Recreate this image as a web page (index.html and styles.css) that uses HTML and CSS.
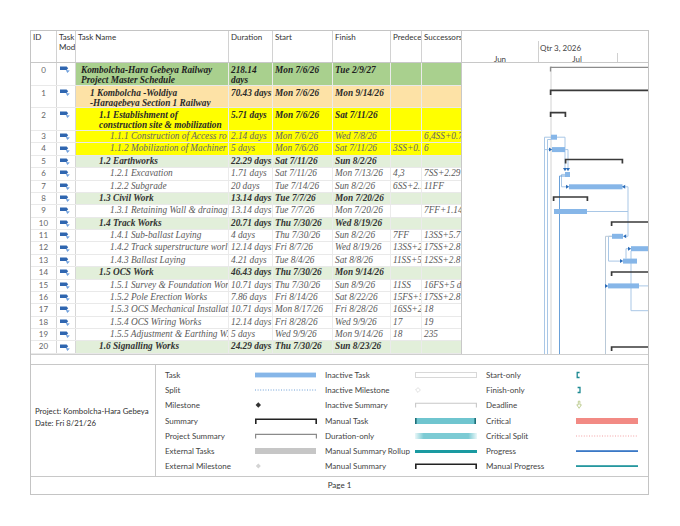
FILE: index.html
```html
<!DOCTYPE html>
<html>
<head>
<meta charset="utf-8">
<title>Kombolcha-Hara Gebeya Railway</title>
<link rel="stylesheet" href="styles.css">
</head>
<body>
<svg class="defs" width="0" height="0">
  <defs>
    <symbol id="mi" viewBox="0 0 10 7">
      <path d="M0 0.4 H6.6 L8.2 2.2 L6.6 4 H0 Z" fill="#2f66b0"/>
      <path d="M5.8 4 L9.8 4.4 L7.3 7 Z" fill="#6f9fdc"/>
    </symbol>
    <linearGradient id="dg" x1="0" x2="1" y1="0" y2="0">
      <stop offset="0" stop-color="#eaf7f8"/>
      <stop offset="0.14" stop-color="#7ccbd4"/>
      <stop offset="0.86" stop-color="#7ccbd4"/>
      <stop offset="1" stop-color="#eaf7f8"/>
    </linearGradient>
  </defs>
</svg>
<div class="page">
  <div class="main">
    <div class="table">
      <div class="thead">
        <div class="hc">ID</div>
        <div class="hc">Task Mode</div>
        <div class="hc">Task Name</div>
        <div class="hc">Duration</div>
        <div class="hc">Start</div>
        <div class="hc">Finish</div>
        <div class="hc">Predecessors</div>
        <div class="hc">Successors</div>
      </div>

      <div class="row tall proj b">
        <div class="id">0</div><div class="mode"><svg class="mi"><use href="#mi"/></svg></div>
        <div class="c l0">Kombolcha-Hara Gebeya Railway<br>Project Master Schedule</div>
        <div class="c">218.14<br>days</div><div class="c">Mon 7/6/26</div><div class="c">Tue 2/9/27</div><div class="c"></div><div class="c"></div>
      </div>
      <div class="row tall t22 sect b">
        <div class="id">1</div><div class="mode"><svg class="mi"><use href="#mi"/></svg></div>
        <div class="c l1">1 Kombolcha -Woldiya<br>-Haragebeya Section 1 Railway</div>
        <div class="c">70.43 days</div><div class="c">Mon 7/6/26</div><div class="c">Mon 9/14/26</div><div class="c"></div><div class="c"></div>
      </div>
      <div class="row tall est b">
        <div class="id">2</div><div class="mode"><svg class="mi"><use href="#mi"/></svg></div>
        <div class="c l2">1.1 Establishment of<br>construction site &amp; mobilization</div>
        <div class="c">5.71 days</div><div class="c">Mon 7/6/26</div><div class="c">Sat 7/11/26</div><div class="c"></div><div class="c"></div>
      </div>
      <div class="row est">
        <div class="id">3</div><div class="mode"><svg class="mi"><use href="#mi"/></svg></div>
        <div class="c l3">1.1.1 Construction of Access ro</div>
        <div class="c">2.14 days</div><div class="c">Mon 7/6/26</div><div class="c">Wed 7/8/26</div><div class="c"></div><div class="c">6,4SS+0.7</div>
      </div>
      <div class="row est">
        <div class="id">4</div><div class="mode"><svg class="mi"><use href="#mi"/></svg></div>
        <div class="c l3">1.1.2 Mobilization of Machiner</div>
        <div class="c">5 days</div><div class="c">Mon 7/6/26</div><div class="c">Sat 7/11/26</div><div class="c">3SS+0.</div><div class="c">6</div>
      </div>
      <div class="row sum b">
        <div class="id">5</div><div class="mode"><svg class="mi"><use href="#mi"/></svg></div>
        <div class="c l2">1.2 Earthworks</div>
        <div class="c">22.29 days</div><div class="c">Sat 7/11/26</div><div class="c">Sun 8/2/26</div><div class="c"></div><div class="c"></div>
      </div>
      <div class="row">
        <div class="id">6</div><div class="mode"><svg class="mi"><use href="#mi"/></svg></div>
        <div class="c l3">1.2.1 Excavation</div>
        <div class="c">1.71 days</div><div class="c">Sat 7/11/26</div><div class="c">Mon 7/13/26</div><div class="c">4,3</div><div class="c">7SS+2.29</div>
      </div>
      <div class="row">
        <div class="id">7</div><div class="mode"><svg class="mi"><use href="#mi"/></svg></div>
        <div class="c l3">1.2.2 Subgrade</div>
        <div class="c">20 days</div><div class="c">Tue 7/14/26</div><div class="c">Sun 8/2/26</div><div class="c">6SS+2..</div><div class="c">11FF</div>
      </div>
      <div class="row sum b">
        <div class="id">8</div><div class="mode"><svg class="mi"><use href="#mi"/></svg></div>
        <div class="c l2">1.3 Civil Work</div>
        <div class="c">13.14 days</div><div class="c">Tue 7/7/26</div><div class="c">Mon 7/20/26</div><div class="c"></div><div class="c"></div>
      </div>
      <div class="row">
        <div class="id">9</div><div class="mode"><svg class="mi"><use href="#mi"/></svg></div>
        <div class="c l3">1.3.1 Retaining Wall &amp; drainag</div>
        <div class="c">13.14 days</div><div class="c">Tue 7/7/26</div><div class="c">Mon 7/20/26</div><div class="c"></div><div class="c">7FF+1.14</div>
      </div>
      <div class="row sum b">
        <div class="id">10</div><div class="mode"><svg class="mi"><use href="#mi"/></svg></div>
        <div class="c l2">1.4 Track Works</div>
        <div class="c">20.71 days</div><div class="c">Thu 7/30/26</div><div class="c">Wed 8/19/26</div><div class="c"></div><div class="c"></div>
      </div>
      <div class="row">
        <div class="id">11</div><div class="mode"><svg class="mi"><use href="#mi"/></svg></div>
        <div class="c l3">1.4.1 Sub-ballast Laying</div>
        <div class="c">4 days</div><div class="c">Thu 7/30/26</div><div class="c">Sun 8/2/26</div><div class="c">7FF</div><div class="c">13SS+5.7</div>
      </div>
      <div class="row">
        <div class="id">12</div><div class="mode"><svg class="mi"><use href="#mi"/></svg></div>
        <div class="c l3">1.4.2 Track superstructure worl</div>
        <div class="c">12.14 days</div><div class="c">Fri 8/7/26</div><div class="c">Wed 8/19/26</div><div class="c">13SS+2</div><div class="c">17SS+2.8</div>
      </div>
      <div class="row">
        <div class="id">13</div><div class="mode"><svg class="mi"><use href="#mi"/></svg></div>
        <div class="c l3">1.4.3 Ballast Laying</div>
        <div class="c">4.21 days</div><div class="c">Tue 8/4/26</div><div class="c">Sat 8/8/26</div><div class="c">11SS+5</div><div class="c">12SS+2.8</div>
      </div>
      <div class="row sum b">
        <div class="id">14</div><div class="mode"><svg class="mi"><use href="#mi"/></svg></div>
        <div class="c l2">1.5 OCS Work</div>
        <div class="c">46.43 days</div><div class="c">Thu 7/30/26</div><div class="c">Mon 9/14/26</div><div class="c"></div><div class="c"></div>
      </div>
      <div class="row">
        <div class="id">15</div><div class="mode"><svg class="mi"><use href="#mi"/></svg></div>
        <div class="c l3">1.5.1 Survey &amp; Foundation Wor</div>
        <div class="c">10.71 days</div><div class="c">Thu 7/30/26</div><div class="c">Sun 8/9/26</div><div class="c">11SS</div><div class="c">16FS+5 d</div>
      </div>
      <div class="row">
        <div class="id">16</div><div class="mode"><svg class="mi"><use href="#mi"/></svg></div>
        <div class="c l3">1.5.2 Pole Erection Works</div>
        <div class="c">7.86 days</div><div class="c">Fri 8/14/26</div><div class="c">Sat 8/22/26</div><div class="c">15FS+5</div><div class="c">17SS+2.8</div>
      </div>
      <div class="row">
        <div class="id">17</div><div class="mode"><svg class="mi"><use href="#mi"/></svg></div>
        <div class="c l3">1.5.3 OCS Mechanical Installat</div>
        <div class="c">10.71 days</div><div class="c">Mon 8/17/26</div><div class="c">Fri 8/28/26</div><div class="c">16SS+2</div><div class="c">18</div>
      </div>
      <div class="row">
        <div class="id">18</div><div class="mode"><svg class="mi"><use href="#mi"/></svg></div>
        <div class="c l3">1.5.4 OCS Wiring Works</div>
        <div class="c">12.14 days</div><div class="c">Fri 8/28/26</div><div class="c">Wed 9/9/26</div><div class="c">17</div><div class="c">19</div>
      </div>
      <div class="row">
        <div class="id">19</div><div class="mode"><svg class="mi"><use href="#mi"/></svg></div>
        <div class="c l3">1.5.5 Adjustment &amp; Earthing W.</div>
        <div class="c">5 days</div><div class="c">Wed 9/9/26</div><div class="c">Mon 9/14/26</div><div class="c">18</div><div class="c">235</div>
      </div>
      <div class="row sum b">
        <div class="id">20</div><div class="mode"><svg class="mi"><use href="#mi"/></svg></div>
        <div class="c l2">1.6 Signalling Works</div>
        <div class="c">24.29 days</div><div class="c">Thu 7/30/26</div><div class="c">Sun 8/23/26</div><div class="c"></div><div class="c"></div>
      </div>
    </div>

    <div class="gantt">
      <div class="ghead">
        <span class="vline q3"></span>
        <span class="vline aug"></span>
        <span class="tl qtr">Qtr 3, 2026</span>
        <span class="tl mon jun">Jun</span>
        <span class="tl mon jul">Jul</span>
      </div>
      <svg class="chart" width="186" height="291" viewBox="462 63 186 291">
        <g fill="none" stroke-width="1">
          <path d="M551 66 V354" stroke="#d2d2d2"/>
          <path d="M551 137.2 H544.5 V354" stroke="#a9c7e6"/>
          <path d="M544.5 149.6 H549" stroke="#a9c7e6"/>
          <path d="M551 139.5 H547.5 V354" stroke="#a9c7e6"/>
          <path d="M557 137.2 H565 V168" stroke="#a9c7e6"/>
          <path d="M565 149.6 H568 V168" stroke="#a9c7e6"/>
          <path d="M565 174.4 H561.5 V186.8 H566" stroke="#a9c7e6"/>
          <path d="M565 176 H559.5 V354" stroke="#6aa0d8"/>
          <path d="M622 186.8 H628 V236.3 H626" stroke="#a9c7e6"/>
          <path d="M587 211.5 H628" stroke="#a9c7e6"/>
          <path d="M612 236.3 H608.5 V261.1 H620" stroke="#a9c7e6"/>
          <path d="M612 236.3 H605.5 V354" stroke="#b9c9d8"/>
          <path d="M626 258.6 V248.7 H628" stroke="#a9c7e6"/>
          <path d="M631 251 V310.7 H648" stroke="#a9c7e6"/>
          <path d="M639 285.9 H648" stroke="#a9c7e6"/>
        </g>
        <g fill="none" stroke-linecap="butt">
          <path d="M550.5 71.5 V67.3 H648" stroke="#8c8c8c" stroke-width="1.3"/>
          <path d="M550.6 95 V90.3 H648" stroke="#3a3a3a" stroke-width="1.7"/>
          <path d="M550.6 117 V112.7 H565.4 V117" stroke="#3a3a3a" stroke-width="1.7"/>
          <path d="M565.6 163.5 V159.5 H622.4 V163.5" stroke="#3a3a3a" stroke-width="1.7"/>
          <path d="M553.6 201 V197 H587.4 V201" stroke="#3a3a3a" stroke-width="1.7"/>
          <path d="M611.6 226 V222 H648" stroke="#3a3a3a" stroke-width="1.7"/>
          <path d="M611.6 276 V272 H648" stroke="#3a3a3a" stroke-width="1.7"/>
          <path d="M611.6 351 V347 H648" stroke="#3a3a3a" stroke-width="1.7"/>
        </g>
        <g fill="#86b6e8">
          <rect x="551" y="134.7" width="6" height="5"/>
          <rect x="552" y="147.1" width="13" height="5"/>
          <rect x="565" y="172" width="5" height="5"/>
          <rect x="569" y="184.3" width="53.5" height="5"/>
          <rect x="554" y="209" width="33" height="5"/>
          <rect x="612" y="233.8" width="11" height="5"/>
          <rect x="631" y="246.2" width="17" height="5"/>
          <rect x="623" y="258.6" width="14" height="5"/>
          <rect x="608" y="283.4" width="31" height="5"/>
        </g>
        <g fill="#2b6cb8">
          <polygon points="549,147.6 552.2,149.6 549,151.6"/>
          <polygon points="563,168 567,168 565,171.2"/>
          <polygon points="566,168 570,168 568,171.2"/>
          <polygon points="566,184.8 569.2,186.8 566,188.8"/>
          <polygon points="625.2,184.8 622,186.8 625.2,188.8"/>
          <polygon points="626.2,234.3 623,236.3 626.2,238.3"/>
          <polygon points="628,246.7 631.2,248.7 628,250.7"/>
          <polygon points="620,259.1 623.2,261.1 620,263.1"/>
          <polygon points="605,283.9 608.2,285.9 605,287.9"/>
        </g>
      </svg>
    </div>
  </div>

  <div class="legend">
    <div class="info">
      <div>Project: Kombolcha-Hara Gebeya</div>
      <div>Date: Fri 8/21/26</div>
    </div>
    <div class="keys">
      <div class="key"><span class="kl">Task</span><svg class="ks" viewBox="0 0 62 10"><rect x="0" y="2.6" width="61" height="4.8" fill="#86b6e8"/></svg></div>
      <div class="key"><span class="kl">Inactive Task</span><svg class="ks" viewBox="0 0 62 10"><rect x="0.5" y="2.5" width="61" height="5" fill="#fff" stroke="#d8d8d8" stroke-width="1"/></svg></div>
      <div class="key"><span class="kl">Start-only</span><svg class="ks" viewBox="0 0 62 10"><path d="M3.6 2.5 H1.2 V7.5 H3.6" fill="none" stroke="#1f8a93" stroke-width="1.3"/></svg></div>

      <div class="key"><span class="kl">Split</span><svg class="ks" viewBox="0 0 62 10"><path d="M0 5 H61" stroke="#6d9fd6" stroke-width="1" stroke-dasharray="1 1.6"/></svg></div>
      <div class="key"><span class="kl">Inactive Milestone</span><svg class="ks" viewBox="0 0 62 10"><polygon points="3,2.6 5.4,5 3,7.4 0.6,5" fill="none" stroke="#d8d8d8" stroke-width="0.8"/></svg></div>
      <div class="key"><span class="kl">Finish-only</span><svg class="ks" viewBox="0 0 62 10"><path d="M1.6 2.5 H4 V7.5 H1.6" fill="none" stroke="#1f8a93" stroke-width="1.3"/></svg></div>

      <div class="key"><span class="kl">Milestone</span><svg class="ks" viewBox="0 0 62 10"><polygon points="3.3,2.3 6,5 3.3,7.7 0.6,5" fill="#333"/></svg></div>
      <div class="key"><span class="kl">Inactive Summary</span><svg class="ks" viewBox="0 0 62 10"><path d="M0.6 7.5 V3.3 H61.4 V7.5" fill="none" stroke="#c8c8c8" stroke-width="1.1"/></svg></div>
      <div class="key"><span class="kl">Deadline</span><svg class="ks" viewBox="0 0 62 10"><path d="M2.3 1.2 H3.9 V4.8 H5.4 L3.1 8.3 L0.8 4.8 H2.3 Z" fill="none" stroke="#b3c47e" stroke-width="0.8"/></svg></div>

      <div class="key"><span class="kl">Summary</span><svg class="ks" viewBox="0 0 62 10"><path d="M0.8 8 V3.3 H61.2 V8" fill="none" stroke="#222" stroke-width="1.6"/></svg></div>
      <div class="key"><span class="kl">Manual Task</span><svg class="ks" viewBox="0 0 62 10"><rect x="0" y="2" width="61" height="6" fill="#6fc5cf"/><rect x="0" y="2" width="1.6" height="6" fill="#1e6f78"/><rect x="59.4" y="2" width="1.6" height="6" fill="#1e6f78"/></svg></div>
      <div class="key"><span class="kl">Critical</span><svg class="ks" viewBox="0 0 62 10"><rect x="0" y="2" width="62" height="6" fill="#f28a84"/></svg></div>

      <div class="key"><span class="kl">Project Summary</span><svg class="ks" viewBox="0 0 62 10"><path d="M0.6 7.5 V3.4 H61.4 V7.5" fill="none" stroke="#8a8a8a" stroke-width="1.2"/></svg></div>
      <div class="key"><span class="kl">Duration-only</span><svg class="ks" viewBox="0 0 62 10"><rect x="0" y="2" width="62" height="6" fill="url(#dg)"/></svg></div>
      <div class="key"><span class="kl">Critical Split</span><svg class="ks" viewBox="0 0 62 10"><path d="M0 5 H62" stroke="#f2a1a4" stroke-width="1" stroke-dasharray="1 1.6"/></svg></div>

      <div class="key"><span class="kl">External Tasks</span><svg class="ks" viewBox="0 0 62 10"><rect x="0" y="2" width="61" height="6" fill="#c6c6c6"/></svg></div>
      <div class="key"><span class="kl">Manual Summary Rollup</span><svg class="ks" viewBox="0 0 62 10"><rect x="0" y="4" width="62" height="3" fill="#1a9aa1"/></svg></div>
      <div class="key"><span class="kl">Progress</span><svg class="ks" viewBox="0 0 62 10"><rect x="0" y="4.2" width="62" height="1.8" fill="#3a78c6"/></svg></div>

      <div class="key"><span class="kl">External Milestone</span><svg class="ks" viewBox="0 0 62 10"><polygon points="3.3,2.5 5.8,5 3.3,7.5 0.8,5" fill="#d4d4d4"/></svg></div>
      <div class="key"><span class="kl">Manual Summary</span><svg class="ks" viewBox="0 0 62 10"><path d="M0.8 8 V3.3 H61.2 V8" fill="none" stroke="#222" stroke-width="1.6"/></svg></div>
      <div class="key"><span class="kl">Manual Progress</span><svg class="ks" viewBox="0 0 62 10"><rect x="0" y="4.2" width="62" height="1.8" fill="#25979f"/></svg></div>
    </div>
  </div>
  <div class="footer">Page 1</div>
</div>
</body>
</html>
```

FILE: styles.css
```css
html, body {
  margin: 0;
  padding: 0;
  background: #ffffff;
}
body {
  padding: 30px 0 0 30px;
  font-family: Lato, "Liberation Sans", sans-serif;
}
.defs {
  position: absolute;
  width: 0;
  height: 0;
  overflow: hidden;
}
.page {
  width: 619px;
  height: 465px;
  box-sizing: border-box;
  border: 1px solid #c4c4c4;
  display: flex;
  flex-direction: column;
}
.main {
  display: flex;
  height: 324px;
  box-sizing: border-box;
  border-bottom: 1px solid #cfcfcf;
}
.table {
  width: 430px;
  flex: none;
}
.thead,
.row {
  display: grid;
  grid-template-columns: 26px 19px 153px 44px 60px 58px 31px 39px;
}
.thead {
  height: 32px;
  box-sizing: border-box;
  border-bottom: 1px solid #c8c8c8;
}
.hc {
  font-size: 8px;
  line-height: 9.5px;
  color: #333;
  padding: 2px 0 0 2px;
  overflow: hidden;
  border-right: 1px solid #d2d2d2;
}
.hc:last-child {
  border-right: none;
}
.row {
  height: 12.39px;
  box-sizing: border-box;
  border-bottom: 1px solid #e9e9e9;
}
.row > div {
  overflow: hidden;
  white-space: nowrap;
  border-right: 1px solid #ebebeb;
}
.row > div:last-child {
  border-right: none;
}
.row > .id,
.row > .mode {
  border-right-color: #d6d6d6;
}
.id {
  font-size: 8px;
  line-height: 11.4px;
  color: #666;
  text-align: center;
}
.mode {
  display: flex;
  align-items: center;
  padding-left: 3px;
}
.mi {
  width: 10px;
  height: 7px;
}
.c {
  font-family: "Liberation Serif", "Times New Roman", serif;
  font-style: italic;
  font-size: 9.3px;
  line-height: 11.4px;
  color: #5a5a5a;
  padding-left: 2px;
}
.b .c {
  font-weight: bold;
  color: #2a2a2a;
}
.l0 { padding-left: 5px; }
.l1 { padding-left: 14px; }
.l2 { padding-left: 23px; }
.l3 { padding-left: 34px; }

.tall {
  height: 23px;
}
.tall.t22 {
  height: 22px;
}
.tall .c,
.tall .id {
  line-height: 10.3px;
  padding-top: 1.5px;
}
.tall .mode {
  align-items: flex-start;
  padding-top: 3px;
}
.proj .c { background: #a9d08e; color: #1e1e1e; }
.sect .c { background: #fde2a6; }
.est .c { background: #ffff00; }
.sum .c { background: #e2efda; color: #333; }
.est:not(.b) .c { color: #666; }

.gantt {
  width: 187px;
  flex: none;
  box-sizing: border-box;
  border-left: 1px solid #c8c8c8;
}
.ghead {
  position: relative;
  height: 32px;
  box-sizing: border-box;
  border-bottom: 1px solid #c8c8c8;
}
.vline {
  position: absolute;
  width: 1px;
  background: #d0d0d0;
}
.vline.q3 {
  left: 76px;
  top: 10px;
  bottom: 0;
}
.vline.aug {
  left: 155px;
  top: 22px;
  bottom: 0;
}
.tl {
  position: absolute;
  font-size: 8px;
  line-height: 10px;
  color: #444;
  white-space: nowrap;
}
.qtr {
  left: 78px;
  top: 12px;
}
.mon {
  top: 22.5px;
  width: 40px;
  text-align: center;
}
.jun { left: 18px; }
.jul { left: 95px; }
.chart {
  display: block;
}

.legend {
  display: flex;
  height: 113px;
  margin-top: 9px;
  box-sizing: border-box;
  border-top: 1px solid #c8c8c8;
  border-bottom: 1px solid #c8c8c8;
}
.info {
  width: 125px;
  flex: none;
  box-sizing: border-box;
  border-right: 1px solid #c8c8c8;
  display: flex;
  flex-direction: column;
  justify-content: center;
  padding: 0 0 7px 4px;
  font-size: 7.8px;
  line-height: 12px;
  color: #333;
  white-space: nowrap;
}
.keys {
  display: grid;
  grid-template-columns: 160px 161px 152px;
  grid-auto-rows: 15.2px;
  padding: 2.4px 0 0 9px;
}
.key {
  display: flex;
  align-items: center;
}
.kl {
  width: 90px;
  flex: none;
  font-size: 8px;
  color: #444;
  white-space: nowrap;
}
.ks {
  width: 62px;
  height: 10px;
  flex: none;
}
.footer {
  height: 16px;
  font-size: 8px;
  line-height: 16px;
  color: #333;
  text-align: center;
}
```
